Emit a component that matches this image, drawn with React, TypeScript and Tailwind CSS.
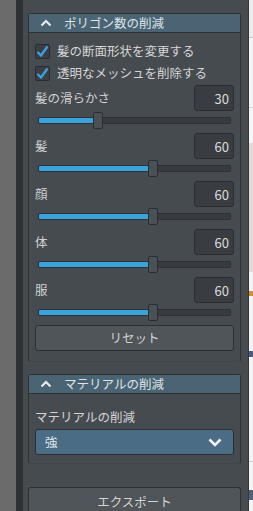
import type { ReactNode } from "react";

const FONT = { fontFamily: '"Noto Sans CJK JP", "Noto Sans", sans-serif' };

const sliders = [
  { label: "髪の滑らかさ", value: 30 },
  { label: "髪", value: 60 },
  { label: "顔", value: 60 },
  { label: "体", value: 60 },
  { label: "服", value: 60 },
];

function ChevronUp() {
  return (
    <svg width="12" height="8" viewBox="0 0 12 8" className="shrink-0">
      <path d="M1.5 6.5 L6 2 L10.5 6.5" fill="none" stroke="#e6eaec" strokeWidth="2.2" />
    </svg>
  );
}

function ChevronDown() {
  return (
    <svg width="14" height="9" viewBox="0 0 14 9" className="shrink-0">
      <path d="M1.5 1.5 L7 7 L12.5 1.5" fill="none" stroke="#f2f4f6" strokeWidth="2.6" />
    </svg>
  );
}

function Section({ title, children }: { title: string; children: ReactNode }) {
  return (
    <div className="rounded-[3px] border border-[#2c3033] border-b-[#41464b]">
      <div className="flex h-[19px] items-center gap-[12px] border-b border-[#2c3033] bg-[#4a6474] pl-[11px] text-[12.5px] leading-none text-[#dfe4e7]">
        <ChevronUp />
        <span className="pt-[1px]">{title}</span>
      </div>
      {children}
    </div>
  );
}

function Check({ label }: { label: string }) {
  return (
    <div className="flex h-[22px] items-center gap-[7px]">
      <div className="flex h-[15px] w-[15px] items-center justify-center rounded-[2px] border border-[#2a2d30] bg-[#3b3f43]">
        <svg width="13" height="13" viewBox="0 0 13 13">
          <path d="M1.5 7 L5 10.5 L11.5 1.5" fill="none" stroke="#3aa2e0" strokeWidth="2.4" />
        </svg>
      </div>
      <span className="pt-[1px] text-[12.5px] leading-none text-[#d6d6d6]">{label}</span>
    </div>
  );
}

function Slider({ label, value }: { label: string; value: number }) {
  return (
    <div className="flex flex-col gap-[1px]">
      <div className="flex h-[26px] items-center justify-between">
        <span className="pt-[1px] text-[12.5px] leading-none text-[#d2d2d2]">{label}</span>
        <div className="flex h-[26px] w-[40px] items-center justify-end rounded-[3px] border border-[#2b2e31] bg-[#393d41] pr-[4px] text-[13px] leading-none text-[#dcdcdc]">
          {value}
        </div>
      </div>
      <div className="relative mx-[3px] h-[17px]">
        <div className="absolute left-0 right-0 top-[5px] h-[7px] overflow-hidden rounded-[2px] border border-[#2e3134] bg-[#383b3f]">
          <div className="h-full bg-[#3aa3de]" style={{ width: `${value}%` }} />
        </div>
        <div
          className="absolute top-0 h-[17px] w-[10px] rounded-[2px] border border-[#2b2e31] bg-[#4b5055]"
          style={{ left: `calc((100% - 10px) * ${value / 100})` }}
        />
      </div>
    </div>
  );
}

export default function App() {
  return (
    <div className="flex h-[511px] w-[253px] overflow-hidden" style={FONT}>
      <div className="w-[16px] shrink-0 bg-[#6b6b6b]" />
      <div className="w-[7px] shrink-0 bg-[#2e3235]" />
      <div className="flex w-[226px] shrink-0 flex-col border-r border-[#34383b] bg-[#464b50] pl-[5px] pr-[7px] pt-[2px]">
        <div className="h-[2px] bg-[#6e7174]" />

        <div className="mt-[11px]">
          <Section title="ポリゴン数の削減">
            <div className="flex flex-col px-[6px] pb-[10px] pt-[7px]">
              <Check label="髪の断面形状を変更する" />
              <Check label="透明なメッシュを削除する" />
              <div className="mt-[1px] flex flex-col gap-[4px]">
                {sliders.map((s) => (
                  <Slider key={s.label} label={s.label} value={s.value} />
                ))}
              </div>
              <button className="mt-[4px] h-[26px] rounded-[3px] border border-[#2c3034] bg-[#50555a] pt-[1px] text-[12.5px] leading-none text-[#d2d2d2]">
                リセット
              </button>
            </div>
          </Section>
        </div>

        <div className="mt-[12px]">
          <Section title="マテリアルの削減">
            <div className="flex flex-col px-[6px] pb-[8px] pt-[15px]">
              <span className="h-[16px] text-[12.5px] leading-[16px] text-[#d6d6d6]">マテリアルの削減</span>
              <div className="mt-[4px] flex h-[26px] items-center justify-between rounded-[3px] border border-[#2b2f33] bg-[#4a6c84] pl-[9px] pr-[11px]">
                <span className="pt-[1px] text-[12.5px] leading-none text-[#dde4ea]">強</span>
                <ChevronDown />
              </div>
            </div>
          </Section>
        </div>

        <div className="mt-[12px] h-[1px] bg-[#6b6f73]" />

        <button className="mt-[11px] flex h-[30px] shrink-0 items-center justify-center rounded-t-[3px] border border-b-0 border-[#2c3034] bg-[#50555a] text-[12.5px] leading-none text-[#d4d4d4]">
          エクスポート
        </button>
      </div>

      <div className="flex w-[4px] shrink-0 flex-col bg-[#f4f4f4]">
        <div className="h-[37px] bg-[#ececec]" />
        <div className="h-[1px] bg-[#c9c9c9]" />
        <div className="h-[69px] bg-[#f3f3f3]" />
        <div className="h-[1px] bg-[#d6d6d6]" />
        <div className="h-[35px] bg-[#f6f6f6]" />
        <div className="h-[129px] bg-[#e8d9d8]" />
        <div className="h-[19px]" />
        <div className="h-[5px] bg-[#d98a3a]" />
        <div className="h-[55px]" />
        <div className="h-[6px] bg-[#4a5a8a]" />
        <div className="h-[104px]" />
        <div className="h-[1px] bg-[#cfcfcf]" />
        <div className="h-[28px]" />
        <div className="h-[10px] bg-[#50607a]" />
      </div>
    </div>
  );
}
